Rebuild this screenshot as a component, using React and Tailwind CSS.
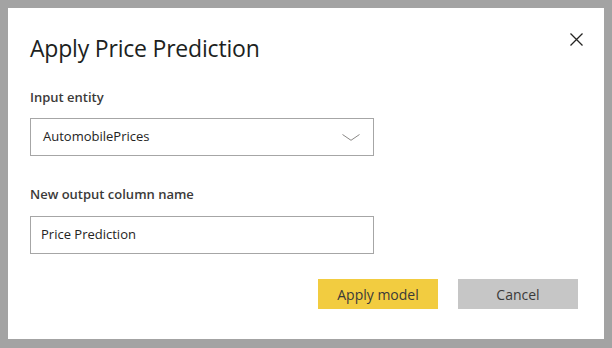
import React from 'react'

const Chevron = () => (
  <svg width="18" height="7" viewBox="0 0 18 7" fill="none">
    <path d="M0.5 0.5 L9 6.3 L17.5 0.5" stroke="#8a8886" strokeWidth="1" />
  </svg>
)

const CloseIcon = () => (
  <svg width="13" height="13" viewBox="0 0 13 13" fill="none">
    <path d="M0.5 0.5 L12.5 12.5 M12.5 0.5 L0.5 12.5" stroke="#252423" strokeWidth="1.3" />
  </svg>
)

const App = () => {
  return (
    <div className="w-[612px] h-[348px] bg-[#a3a3a3] pt-2 pl-2 pr-2 pb-[9px] font-['Open_Sans',sans-serif]">
      <div className="relative w-[596px] h-[331px] bg-white px-[22px] pt-[24px]">
        <button className="absolute left-[562px] top-[25px] p-0">
          <CloseIcon />
        </button>

        <h1 className="text-[23px] leading-[32px] text-[#201f1e] tracking-[-0.2px]">Apply Price Prediction</h1>

        <div className="mt-[24px]">
          <p className="text-[13px] leading-[18px] font-semibold text-[#3b3a39]">Input entity</p>
          <div className="mt-[12px] w-[344px] h-[38px] border border-[#a6a6a6] flex items-center justify-between pl-[12px] pr-[13px]">
            <span className="text-[13px] text-[#252423]">AutomobilePrices</span>
            <Chevron />
          </div>
        </div>

        <div className="mt-[29px]">
          <p className="text-[13px] leading-[18px] font-semibold text-[#3b3a39]">New output column name</p>
          <div className="mt-[13px] w-[344px] h-[38px] border border-[#a6a6a6] flex items-center pl-[10px]">
            <span className="text-[13px] text-[#252423]">Price Prediction</span>
          </div>
        </div>

        <div className="flex justify-end gap-[20px] mt-[25px] pr-[4px]">
          <button className="w-[120px] h-[30px] bg-[#f2cc40] text-[14px] text-[#3b3a39]">Apply model</button>
          <button className="w-[120px] h-[30px] bg-[#c6c6c6] text-[14px] text-[#3b3a39]">Cancel</button>
        </div>
      </div>
    </div>
  )
}

export default App
